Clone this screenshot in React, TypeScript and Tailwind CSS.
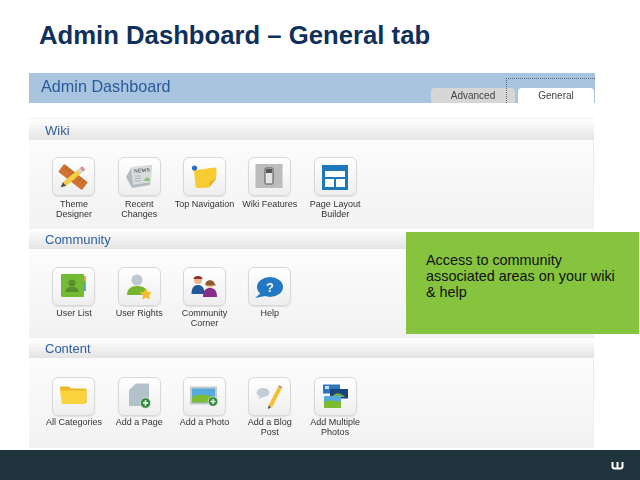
import React from "react";

const Svg = ({ children }: { children: React.ReactNode }) => (
  <svg width="43" height="39" viewBox="0 0 43 39" className="block">{children}</svg>
);

const icons: Record<string, React.ReactNode> = {
  theme: (
    <Svg>
      <g transform="rotate(38 21 20)"><rect x="6" y="15" width="30" height="10" rx="1" fill="#cf7430" /><path d="M10 15.500v3M14 15.500v3M18 15.500v3M24 15.500v3M28 15.500v3M32 15.500v3" stroke="#9b521f" strokeWidth="0.8" /></g>
      <g transform="rotate(-40 21 20)"><rect x="10" y="17.500" width="19" height="5" fill="#f3cf45" /><rect x="29" y="17.500" width="3" height="5" fill="#cfd3d6" /><rect x="32" y="17.500" width="3" height="5" rx="1" fill="#dc8b85" /><path d="M10 17.500 5 20l5 2.500z" fill="#5a4a32" /></g>
    </Svg>
  ),
  news: (
    <Svg>
      <path d="M8 20 13 11l21-3-2 20-18 3z" fill="#b4bbbf" />
      <path d="M13 10 34 8l-1 17-18 3z" fill="#d9dcdd" />
      <text x="16" y="16" fontSize="5.500" fontWeight="700" fontFamily="Liberation Serif, serif" fill="#555" transform="rotate(-6 16 16)">NEWS</text>
      <path d="M17 19h6M17 21.500h6M17 24h6" stroke="#a2a9ad" strokeWidth="0.8" />
      <path d="M25 24l4-4 3 2v2z" fill="#8fc27a" />
    </Svg>
  ),
  note: (
    <Svg>
      <path d="M11 13.500 31 10.500c2 0 2.500 1 2.500 3L33 22l-7 8.500-11.500 0.500c-1.500 0-2-1-2-2z" fill="#f8cb32" />
      <path d="M26 30.500l1-6 6-2.500z" fill="#e3ae20" />
      <circle cx="11.500" cy="11" r="2.600" fill="#2a6fc4" />
    </Svg>
  ),
  features: (
    <Svg>
      <rect x="7.500" y="7" width="27" height="24" fill="#bcbcbc" />
      <rect x="17" y="11" width="8" height="16" rx="1" fill="#e4e4e4" stroke="#555" strokeWidth="1" />
      <rect x="18" y="12" width="6" height="4" fill="#555" />
    </Svg>
  ),
  layout: (
    <Svg>
      <rect x="8" y="8" width="26" height="25" fill="#1f79b8" />
      <rect x="11" y="14" width="20" height="6" fill="#fff" />
      <rect x="11" y="22" width="9" height="8" fill="#fff" />
      <rect x="22" y="22" width="9" height="8" fill="#fff" />
    </Svg>
  ),
  users: (
    <Svg>
      <rect x="9" y="7" width="23" height="23" rx="1" fill="#74bb35" />
      <rect x="32" y="9" width="1.800" height="5" fill="#e8a13a" />
      <rect x="32" y="14" width="1.800" height="5" fill="#57b06b" />
      <rect x="32" y="19" width="1.800" height="5" fill="#4a9fc9" />
      <circle cx="20" cy="16" r="3.600" fill="#558f2b" />
      <path d="M13.500 25c0-4 3-5 6.500-5s6.500 1 6.500 5z" fill="#558f2b" />
    </Svg>
  ),
  rights: (
    <Svg>
      <circle cx="19" cy="13" r="5.500" fill="#bcc7cf" />
      <path d="M9 28c0-6 4-9 10-9s9 2 10 6v3z" fill="#78b52f" />
      <path d="M28 21l1.900 3.800 4.100.6-3 2.900.7 4.200-3.700-2-3.700 2 .7-4.200-3-2.900 4.100-.6z" fill="#f5bb2c" />
    </Svg>
  ),
  corner: (
    <Svg>
      <circle cx="15" cy="13" r="4" fill="#e9b590" />
      <path d="M10.500 12c0-4 9-4 9 0z" fill="#8c2f2b" />
      <path d="M8.500 27c0-7 3-9 6.500-9s6.500 2 6.500 9z" fill="#23599b" />
      <circle cx="27" cy="17" r="3.800" fill="#eebd98" />
      <path d="M22.500 17c0-5 9-5 9 0l2 1-2 .5h-9z" fill="#8d5a2d" />
      <path d="M20 30c0-7 3-9 7-9s7 2 7 9z" fill="#8a2c8c" />
    </Svg>
  ),
  help: (
    <Svg>
      <ellipse cx="22" cy="20" rx="13" ry="10" fill="#2278c4" />
      <path d="M13 26l-6 5 10-2z" fill="#2278c4" />
      <text x="22" y="25" textAnchor="middle" fontSize="13" fontWeight="700" fontFamily="Liberation Sans, sans-serif" fill="#fff">?</text>
    </Svg>
  ),
  folder: (
    <Svg>
      <path d="M8 11c0-1 .5-1.500 1.500-1.500h7L19 11.500h14c1 0 1.500 .5 1.500 1.500v13H10z" fill="#e9b826" />
      <path d="M8 13.500h26.500L33 27H10z" fill="#fbd33c" />
    </Svg>
  ),
  page: (
    <Svg>
      <path d="M11 13 18 6.500h13V29H11z" fill="#b3c1cb" />
      <circle cx="27.500" cy="26" r="5.200" fill="#2e8b3d" stroke="#fff" strokeWidth="0.6" />
      <path d="M24.800 26h5.400M27.500 23.300v5.400" stroke="#fff" strokeWidth="1.500" />
    </Svg>
  ),
  photo: (
    <Svg>
      <rect x="7" y="9.500" width="27" height="18" fill="#c3c9cc" />
      <rect x="9" y="11.500" width="23" height="14" fill="#56a9dc" />
      <path d="M9 20c6-3 14-3 23 1v4.500H9z" fill="#7dbb32" />
      <circle cx="30" cy="24.500" r="4.800" fill="#2e8b3d" stroke="#fff" strokeWidth="0.6" />
      <path d="M27.500 24.500h5M30 22v5" stroke="#fff" strokeWidth="1.400" />
    </Svg>
  ),
  blog: (
    <Svg>
      <ellipse cx="15" cy="15.500" rx="6.500" ry="4.500" fill="#c3ced6" />
      <path d="M12 19l-2 3 6-2z" fill="#c3ced6" />
      <path d="M20.500 28.500 30 10l3.500 1.800L24 30.500z" fill="#f2c02e" />
      <path d="M30 10l1-2 3.500 1.800-1 2z" fill="#d99287" />
      <path d="M20.500 28.500l-.5 3.500 3-1.500z" fill="#444" />
    </Svg>
  ),
  multi: (
    <Svg>
      <rect x="9" y="7.500" width="17" height="9" fill="#2d76b8" />
      <rect x="11" y="9" width="4" height="3" fill="#bfe0f5" />
      <rect x="16" y="12" width="18" height="9.500" fill="#17447c" />
      <path d="M18 20c3-5 8-5 13 0z" fill="#6fb04a" />
      <rect x="10" y="19" width="17" height="12" fill="#56a9dc" />
      <path d="M10 25c5-2 11-2 17 0v6H10z" fill="#7dbb32" />
    </Svg>
  ),
};

type Item = { k: string; label: string[] };

const Tile = ({ k, label, labelClass }: Item & { labelClass: string }) => (
  <div className="w-[65.3px] flex flex-col items-center">
    <div className="w-[43px] h-[39px] rounded-[6px] border border-[#d8d8d8] bg-gradient-to-b from-white to-[#eeeeee] shadow-[0_1px_1px_#e0e0e0] overflow-hidden">
      <div className="-m-px">{icons[k]}</div>
    </div>
    <div className={`${labelClass} w-[65.3px] text-center text-[9px] leading-[9.5px] text-[#333] whitespace-nowrap`}>
      {label.map((l) => (
        <div key={l}>{l}</div>
      ))}
    </div>
  </div>
);

const Section = ({ title, items, hClass, pClass, labelClass }: { title: string; items: Item[]; hClass: string; pClass: string; labelClass: string }) => (
  <section className="w-[565px]">
    <div className={`${hClass} pl-[16px] pt-[2px] flex items-center bg-gradient-to-b from-white to-[#e4e4e4] border-t border-[#efefef] text-[13px] text-[#2f5f9e]`}>
      {title}
    </div>
    <div className={`${pClass} pl-[12.300px] flex bg-gradient-to-b from-[#fcfcfc] to-[#f2f2f2] border-r border-[#ededed]`}>
      {items.map((i) => (
        <Tile key={i.k} labelClass={labelClass} {...i} />
      ))}
    </div>
  </section>
);

export default function App() {
  return (
    <div className="relative w-[640px] h-[480px] overflow-hidden bg-white flex flex-col font-['Liberation_Sans',Arial,sans-serif]">
      <h1 className="h-[73px] pl-[39px] pt-[20px] text-[25.7px] leading-[30px] font-bold text-[#10305c]">
        Admin Dashboard – General tab
      </h1>

      <div className="ml-[29px] w-[566px] flex-1 flex flex-col blur-[0.45px]">
        <div className="relative h-[30px] bg-[#a8c4de] flex items-start justify-between">
          <div className="pl-[12px] pt-[3px] text-[16.2px] leading-[20px] text-[#2a5a9a]">Admin Dashboard</div>
          <div className="flex items-end h-full gap-[3px] pr-px">
            <div className="w-[84px] h-[15px] rounded-t-[4px] bg-[#d6d6d6] text-center text-[10px] leading-[15px] text-[#444]">Advanced</div>
            <div className="w-[76px] h-[15px] rounded-t-[4px] bg-white text-center text-[10px] leading-[15px] text-[#444]">General</div>
          </div>
          <div className="absolute left-[477px] top-[5px] w-[89px] h-[25px] border-l border-t border-dotted border-[#56697a]" />
        </div>
        <div className="h-[15px] shrink-0" />
        <Section
          title="Wiki"
          hClass="h-[22px]"
          pClass="h-[88px] pt-[17px]"
          labelClass="mt-[4px]"
          items={[
            { k: "theme", label: ["Theme", "Designer"] },
            { k: "news", label: ["Recent", "Changes"] },
            { k: "note", label: ["Top Navigation"] },
            { k: "features", label: ["Wiki Features"] },
            { k: "layout", label: ["Page Layout", "Builder"] },
          ]}
        />
        <Section
          title="Community"
          hClass="h-[21px]"
          pClass="h-[88px] pt-[18px]"
          labelClass="mt-[3px]"
          items={[
            { k: "users", label: ["User List"] },
            { k: "rights", label: ["User Rights"] },
            { k: "corner", label: ["Community", "Corner"] },
            { k: "help", label: ["Help"] },
          ]}
        />
        <Section
          title="Content"
          hClass="h-[21px]"
          pClass="h-[90px] pt-[19px]"
          labelClass="mt-[2px]"
          items={[
            { k: "folder", label: ["All Categories"] },
            { k: "page", label: ["Add a Page"] },
            { k: "photo", label: ["Add a Photo"] },
            { k: "blog", label: ["Add a Blog", "Post"] },
            { k: "multi", label: ["Add Multiple", "Photos"] },
          ]}
        />
      </div>

      <footer className="h-[30px] shrink-0 bg-[#1f333d] flex items-center justify-end pr-[16px]">
        <svg width="13" height="9" viewBox="0 0 13 9">
          <path d="M1.500 1v4.500c0 1.500 1 2 2.200 2h5.600c1.200 0 2.200-.5 2.200-2V1M6.500 1v6" fill="none" stroke="#fff" strokeWidth="2" />
        </svg>
      </footer>

      <div className="absolute left-[406px] top-[232px] w-[233px] h-[102px] bg-[#86c440] pl-[20px] pt-[20px] text-[14.4px] leading-[16px] text-[#111]">
        Access to community
        <br />
        associated areas on your wiki
        <br />
        &amp; help
      </div>
    </div>
  );
}
